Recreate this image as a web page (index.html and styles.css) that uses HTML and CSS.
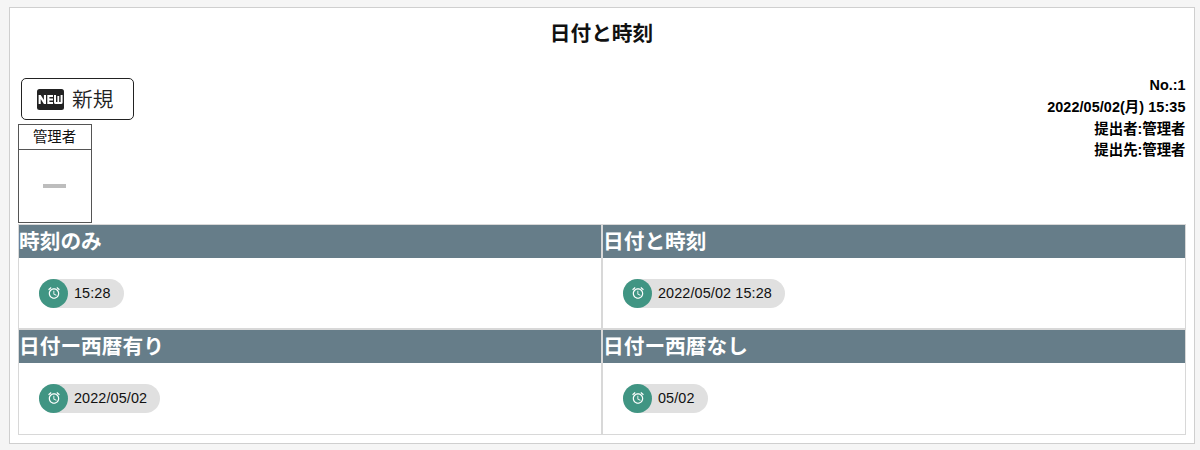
FILE: index.html
```html
<!DOCTYPE html>
<html lang="ja">
<head>
<meta charset="utf-8">
<title>日付と時刻</title>
<link rel="stylesheet" href="styles.css">
</head>
<body>
<svg width="0" height="0" class="defs">
  <symbol id="alarm" viewBox="0 0 24 24">
    <path d="M22 5.72l-4.6-3.86-1.29 1.53 4.6 3.86L22 5.72zM7.88 3.39L6.6 1.86 2 5.71l1.29 1.53 4.59-3.85zM12.5 8H11v6l4.75 2.85.75-1.23-4-2.37V8zM12 4c-4.97 0-9 4.03-9 9s4.02 9 9 9c4.97 0 9-4.03 9-9s-4.03-9-9-9zm0 16c-3.87 0-7-3.13-7-7s3.13-7 7-7 7 3.13 7 7-3.13 7-7 7z"/>
  </symbol>
</svg>
<main class="sheet">
  <h1 class="title">日付と時刻</h1>
  <div class="top">
    <div class="status">
      <div class="new">
        <svg class="new-icon" viewBox="0 0 27 21">
          <rect width="27" height="21" rx="2.5" fill="#222"/>
          <path d="M1.600 15V6H3.700L6.900 11V6H9V15H6.900L3.700 10V15ZM10.300 6H16V8H12.400V9.500H16V11.500H12.400V13H16V15H10.300ZM17 6H19V13H20.400V7H22.200V13H23.600V6H25.600V13.400Q25.600 15 24 15H18.600Q17 15 17 13.400Z" fill="#fff"/>
        </svg>
        <span>新規</span>
      </div>
      <div class="stamp">
        <div class="stamp-name">管理者</div>
        <div class="stamp-body"><span class="dash"></span></div>
      </div>
    </div>
    <div class="meta">
      <div>No.:1</div>
      <div class="date">2022/05/02(月) 15:35</div>
      <div>提出者:管理者</div>
      <div>提出先:管理者</div>
    </div>
  </div>
  <div class="grid">
    <section class="cell">
      <h2 class="head">時刻のみ</h2>
      <div class="body"><div class="chip"><span class="avatar"><svg><use href="#alarm"/></svg></span><span class="label">15:28</span></div></div>
    </section>
    <section class="cell">
      <h2 class="head">日付と時刻</h2>
      <div class="body"><div class="chip"><span class="avatar"><svg><use href="#alarm"/></svg></span><span class="label">2022/05/02 15:28</span></div></div>
    </section>
    <section class="cell">
      <h2 class="head">日付ー西暦有り</h2>
      <div class="body"><div class="chip"><span class="avatar"><svg><use href="#alarm"/></svg></span><span class="label">2022/05/02</span></div></div>
    </section>
    <section class="cell">
      <h2 class="head">日付ー西暦なし</h2>
      <div class="body"><div class="chip"><span class="avatar"><svg><use href="#alarm"/></svg></span><span class="label">05/02</span></div></div>
    </section>
  </div>
</main>
</body>
</html>
```
FILE: styles.css
```css
* { box-sizing: border-box; }
body {
  margin: 0;
  height: 450px;
  padding: 7px 5px 6px 9px;
  background: #f5f5f5;
  color: #111;
  font-family: "Liberation Sans", "Noto Sans CJK JP", sans-serif;
  overflow: hidden;
}
.defs { display: block; height: 0; }
.sheet {
  height: 437px;
  padding: 0 8.5px 0 7.5px;
  background: #fff;
  border: 1px solid #cfcfcf;
}
.title {
  margin: 0;
  height: 70px;
  padding-top: 11px;
  font-size: 20.7px;
  font-weight: 700;
  line-height: 30px;
  text-align: center;
}
.top {
  display: flex;
  justify-content: space-between;
  height: 146px;
}
.new {
  display: flex;
  align-items: center;
  gap: 8px;
  width: 113px;
  height: 42px;
  margin: 0 0 4px 3.5px;
  padding-left: 15px;
  border: 1px solid #222;
  border-radius: 5px;
  color: #222;
  font-size: 20.7px;
  font-weight: 350;
  line-height: 30px;
}
.new span { padding-top: 2px; }
.new-icon { width: 27px; height: 21px; }
.stamp {
  width: 74px;
  height: 99px;
  border: 1px solid #555;
}
.stamp-name {
  height: 25px;
  border-bottom: 1px solid #555;
  font-size: 14.4px;
  line-height: 25px;
  text-align: center;
}
.stamp-body {
  display: flex;
  align-items: center;
  justify-content: center;
  height: 72px;
}
.dash { width: 23px; height: 4px; background: #bdbdbd; }
.meta {
  margin-top: -2.6px;
  color: #000;
  font-size: 14.4px;
  font-weight: 700;
  line-height: 21.6px;
  text-align: right;
}
.date { letter-spacing: 0.08px; }
.grid {
  display: grid;
  grid-template-columns: 584px 584px;
  grid-template-rows: 105px 106px;
}
.cell { border: 1px solid #d8d8d8; }
.head {
  margin: 0;
  height: 33px;
  padding-left: 0.5px;
  background: #667d89;
  color: #fff;
  font-size: 20.7px;
  font-weight: 700;
  line-height: 34px;
}
.body { padding: 20.5px 21px 21px 20.5px; }
.chip {
  display: inline-flex;
  align-items: center;
  height: 29px;
  padding-right: 13px;
  border-radius: 15px;
  background: #e0e0e0;
}
.avatar {
  display: flex;
  align-items: center;
  justify-content: center;
  width: 29px;
  height: 29px;
  border-radius: 50%;
  background: #409583;
}
.avatar svg { width: 14px; height: 14px; fill: #fff; }
.label { margin-left: 6px; font-size: 14.4px; letter-spacing: 0.12px; line-height: 20px; }
```
